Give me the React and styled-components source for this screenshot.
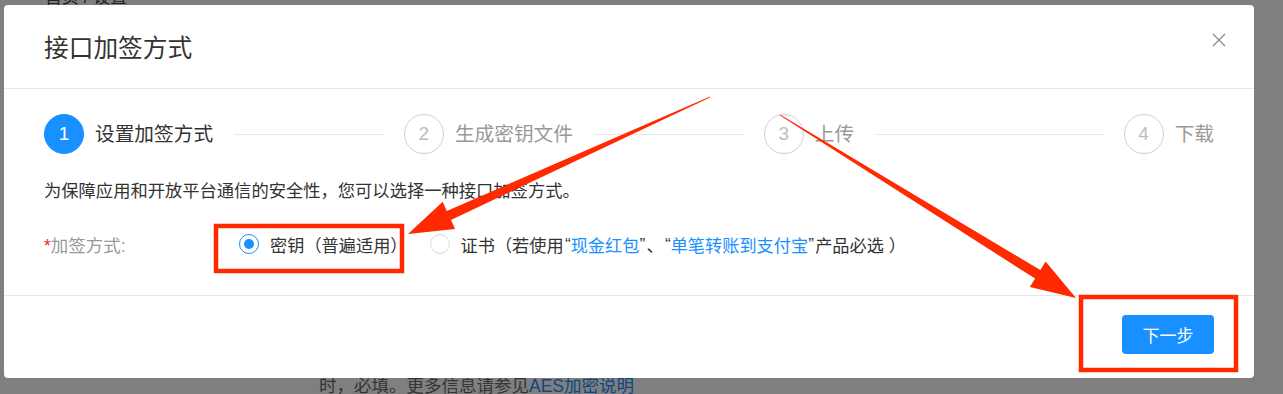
import React from "react";
import styled, { createGlobalStyle } from "styled-components";

const GlobalStyle = createGlobalStyle`
  html, body {
    margin: 0;
    padding: 0;
    overflow: hidden;
    background: #fff;
  }
  body {
    font-family: "Liberation Sans", "Noto Sans CJK SC", sans-serif;
  }
`;

const Page = styled.div`
  height: 394px;
  display: flex;
  flex-direction: column;
  padding-left: 45px;
  color: #333;
`;
const Breadcrumb = styled.div`
  margin-top: -14px;
  font-size: 17px;
  line-height: 24px;
  color: #444;
`;
const HelpText = styled.div`
  margin-top: 364px;
  margin-left: 274px;
  font-size: 17.5px;
  line-height: 24px;
  color: #6a6a6a;
  white-space: nowrap;
`;
const HelpLink = styled.span`
  color: #1890ff;
`;

const Mask = styled.div`
  position: fixed;
  inset: 0;
  background: rgba(0, 0, 0, 0.5);
`;
const ModalWrap = styled.div`
  position: fixed;
  inset: 0;
  padding: 5px 0 0 4px;
`;
const Modal = styled.div`
  position: relative;
  width: 1250px;
  background: #fff;
  border-radius: 4px;
  color: #333;
`;
const Header = styled.div`
  padding: 28px 40px 23px;
  border-bottom: 1px solid #e8e8e8;
`;
const Title = styled.div`
  font-size: 24.7px;
  line-height: 32px;
  color: #333;
`;
const Close = styled.button`
  position: absolute;
  top: 28px;
  right: 28px;
  width: 14px;
  height: 14px;
  padding: 0;
  border: 0;
  background: none;
  display: flex;
`;
const Body = styled.div`
  padding: 25px 40px 31px;
`;
const Steps = styled.div`
  display: flex;
  align-items: center;
`;
const StepItem = styled.div`
  flex: ${(p) => (p.$last ? "none" : 1)};
  display: flex;
  align-items: center;
`;
const StepIcon = styled.div`
  width: 40px;
  height: 40px;
  box-sizing: border-box;
  border-radius: 50%;
  display: flex;
  align-items: center;
  justify-content: center;
  font-size: 19px;
  background: ${(p) => (p.$active ? "#1890ff" : "#fff")};
  border: 1px solid ${(p) => (p.$active ? "#1890ff" : "#d0d0d0")};
  color: ${(p) => (p.$active ? "#fff" : "#bdbdbd")};
`;
const StepTitle = styled.div`
  margin-left: 11px;
  font-size: 19.7px;
  line-height: 28px;
  color: ${(p) => (p.$active ? "#333" : "#999")};
  white-space: nowrap;
`;
const StepTail = styled.div`
  flex: 1;
  height: 1px;
  background: #e8e8e8;
  margin: 0 20px 0 21px;
`;
const Desc = styled.div`
  margin-top: 25px;
  font-size: 17.3px;
  line-height: 24px;
  color: #333;
`;
const FormRow = styled.div`
  margin-top: 21px;
  height: 40px;
  display: flex;
  align-items: center;
  font-size: 17.2px;
`;
const Label = styled.div`
  width: 195px;
  font-size: 17.5px;
  color: #999;
`;
const Required = styled.span`
  color: #f5222d;
`;
const RadioOption = styled.label`
  display: flex;
  align-items: center;
  margin-right: 22px;
  color: #333;
  white-space: nowrap;
`;
const RadioDot = styled.span`
  width: 20px;
  height: 20px;
  box-sizing: border-box;
  border-radius: 50%;
  border: 1px solid ${(p) => (p.$checked ? "#1890ff" : "#d9d9d9")};
  margin-right: 11px;
  display: flex;
  align-items: center;
  justify-content: center;
  &::after {
    content: "";
    width: 10px;
    height: 10px;
    border-radius: 50%;
    background: #1890ff;
    display: ${(p) => (p.$checked ? "block" : "none")};
  }
`;
const Quote = styled.span`
  display: inline-block;
  width: 7px;
  text-align: ${(p) => (p.$open ? "right" : "left")};
`;
const Link = styled.span`
  color: #1890ff;
`;
const Footer = styled.div`
  border-top: 1px solid #e8e8e8;
  padding: 19px 40px 24px;
  display: flex;
  justify-content: flex-end;
`;
const PrimaryButton = styled.button`
  width: 92px;
  height: 39px;
  border: 0;
  border-radius: 4px;
  background: #1890ff;
  color: #fff;
  font-family: inherit;
  font-size: 17px;
`;

const Annotations = styled.svg`
  position: fixed;
  inset: 0;
  pointer-events: none;
`;

const steps = ["设置加签方式", "生成密钥文件", "上传", "下载"];

export default function App() {
  return (
    <>
      <GlobalStyle />
      <Page>
        <Breadcrumb>首页 / 设置</Breadcrumb>
        <HelpText>
          时，必填。更多信息请参见<HelpLink>AES加密说明</HelpLink>
        </HelpText>
      </Page>
      <Mask />
      <ModalWrap>
        <Modal>
          <Header>
            <Title>接口加签方式</Title>
          </Header>
          <Close aria-label="close">
            <svg width="14" height="14" viewBox="0 0 14 14">
              <path d="M1 1L13 13M13 1L1 13" stroke="#8c8c8c" strokeWidth="1.4" />
            </svg>
          </Close>
          <Body>
            <Steps>
              {steps.map((s, i) => {
                const last = i === steps.length - 1;
                return (
                  <StepItem key={s} $last={last}>
                    <StepIcon $active={i === 0}>{i + 1}</StepIcon>
                    <StepTitle $active={i === 0}>{s}</StepTitle>
                    {!last && <StepTail />}
                  </StepItem>
                );
              })}
            </Steps>
            <Desc>为保障应用和开放平台通信的安全性，您可以选择一种接口加签方式。</Desc>
            <FormRow>
              <Label>
                <Required>*</Required>加签方式:
              </Label>
              <RadioOption>
                <RadioDot $checked />
                密钥（普遍适用）
              </RadioOption>
              <RadioOption>
                <RadioDot />
                证书（若使用<Quote $open>“</Quote>
                <Link>现金红包</Link>
                <Quote>”</Quote>、<Quote $open>“</Quote>
                <Link>单笔转账到支付宝</Link>
                <Quote>”</Quote>产品必选 ）
              </RadioOption>
            </FormRow>
          </Body>
          <Footer>
            <PrimaryButton>下一步</PrimaryButton>
          </Footer>
        </Modal>
      </ModalWrap>
      <Annotations width="1283" height="394" viewBox="0 0 1283 394">
        <rect x="216" y="226" width="186" height="45" fill="none" stroke="#ff2a00" strokeWidth="4.5" />
        <rect x="1081" y="297" width="155" height="73" fill="none" stroke="#ff2a00" strokeWidth="4.5" />
        <polygon
          fill="#ff2a00"
          points="710,96.5 446.8,210.9 442.7,201.8 408,234 455.1,229 451,219.9 710,97.5"
        />
        <polygon
          fill="#ff2a00"
          points="780,114.5 1040.3,270.1 1045.6,261.5 1076,298 1029.8,287.1 1035.1,278.6 780,115.5"
        />
      </Annotations>
    </>
  );
}
